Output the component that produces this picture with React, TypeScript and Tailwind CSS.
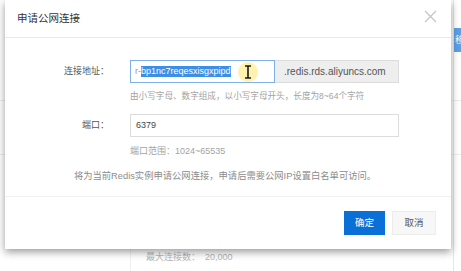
const FONT = "font-['Liberation_Sans','Noto_Sans_CJK_SC',sans-serif]"

function Background() {
  return (
    <div className="absolute inset-0">
      {/* faint page lines behind the dialog */}
      <div className="absolute left-0 right-0 top-[100px] h-px bg-[#eeeeee]" />
      <div className="absolute left-0 right-0 top-[154px] h-px bg-[#eeeeee]" />
      <div className="absolute left-[453px] top-0 bottom-0 w-px bg-[#e6e6e6]" />
      <div className="absolute left-[454px] top-[28px] h-[24px] w-[12px] overflow-hidden bg-[#5d9fe2] pl-px text-[9px] leading-[24px] text-white">
        移
      </div>
      <div className="absolute left-[130px] top-[249px] bottom-0 w-px bg-[#f0f0f0]" />
      <div className="absolute left-[146px] top-[251px] text-[9px] leading-[12px] text-[#b5b5b5]">
        最大连接数：&nbsp;&nbsp;20,000
      </div>
    </div>
  )
}

function Cursor() {
  return (
    <svg width="10" height="14" viewBox="0 0 10 14" className="absolute left-[112px] top-[4px]">
      <path d="M2 1 H8 M5 1 V13 M2 13 H8" stroke="#1a1a1a" strokeWidth="1.6" fill="none" />
    </svg>
  )
}

export default function App() {
  return (
    <div className={`relative h-[271px] w-[461px] overflow-hidden bg-white ${FONT}`}>
      <Background />

      <div className="absolute left-[5px] top-0 flex h-[249px] w-[446px] flex-col bg-white shadow-[0_3px_8px_rgba(0,0,0,0.4)]">
        {/* Header */}
        <div className="flex h-[38px] shrink-0 items-center justify-between border-b border-[#e9e9e9] pl-[12px] pr-[14px]">
          <span className="text-[10.5px] text-[#333]">申请公网连接</span>
          <svg width="13" height="13" viewBox="0 0 13 13" className="mb-[4px]">
            <path d="M1 1 L12 12 M12 1 L1 12" stroke="#c4c4c4" strokeWidth="1.2" />
          </svg>
        </div>

        {/* Body */}
        <div className="flex-1 pt-[22px]">
          <div className="flex items-center">
            <div className="w-[125px] pr-[21px] text-right text-[9px] text-[#555]">连接地址：</div>
            <div className="flex h-[23px]">
              <div className="relative flex w-[145px] items-center border border-[#7fb1e8] pl-[4px] text-[9px]">
                <span className="text-[#999]">r-</span>
                <span className="bg-[#3d8fe6] leading-[11px] text-white">bp1nc7reqesxisgxpipd</span>
                <div className="absolute left-[107px] top-[1px] h-[20px] w-[20px] rounded-full bg-[rgba(255,236,140,0.7)]" />
                <Cursor />
              </div>
              <div className="flex w-[124px] items-center border border-l-0 border-[#dcdcdc] bg-[#eeeeee] pl-[9px] text-[10px] text-[#555]">
                .redis.rds.aliyuncs.com
              </div>
            </div>
          </div>
          <div className="mt-[7px] pl-[125px] text-[8.6px] leading-[12px] text-[#a3a3a3]">
            由小写字母、数字组成，以小写字母开头，长度为8~64个字符
          </div>

          <div className="mt-[12px] flex items-center">
            <div className="w-[125px] pr-[21px] text-right text-[9px] text-[#555]">端口：</div>
            <div className="flex h-[23px] w-[269px] items-center border border-[#dcdcdc] pl-[5px] text-[9px] text-[#444]">
              6379
            </div>
          </div>
          <div className="mt-[8px] pl-[125px] text-[9px] leading-[12px] text-[#a3a3a3]">
            端口范围：1024~65535
          </div>

          <div className="mt-[13px] pr-[6px] text-center text-[9.3px] leading-[12px] text-[#8c8c8c]">
            将为当前Redis实例申请公网连接，申请后需要公网IP设置白名单可访问。
          </div>
        </div>

        {/* Footer */}
        <div className="flex h-[53px] shrink-0 items-center justify-end gap-[7px] border-t border-[#f0f0f0] pr-[15px]">
          <button className="h-[24px] w-[41px] bg-[#0a6fd6] text-[9.5px] text-white">确定</button>
          <button className="h-[24px] w-[44px] border border-[#ececec] bg-[#f7f7f7] text-[9.5px] text-[#555]">取消</button>
        </div>
      </div>
    </div>
  )
}
